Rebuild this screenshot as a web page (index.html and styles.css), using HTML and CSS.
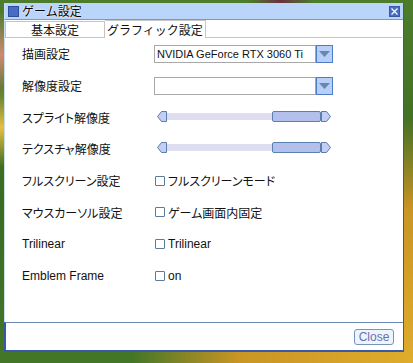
FILE: index.html
```html
<!DOCTYPE html>
<html>
<head>
    <title>ゲーム設定</title>
    <link rel="stylesheet" href="styles.css">
</head>
<body>
    <div class="window">
        <div class="titlebar">
            <span class="title-icon"></span>
            <span class="title">ゲーム設定</span>
            <span class="close-x">
                <svg width="9" height="9" viewBox="0 0 9 9"><path d="M1.5 1.5 L7.5 7.5 M7.5 1.5 L1.5 7.5" stroke="#fff" stroke-width="1.2"/></svg>
            </span>
        </div>

        <div class="tabs">
            <div class="tab">基本設定</div>
            <div class="tab active">グラフィック設定</div>
            <div class="tab-rest"></div>
        </div>

        <div class="content">
            <div class="row">
                <label>描画設定</label>
                <div class="select">
                    <span class="select-value">NVIDIA GeForce RTX 3060 Ti</span>
                    <span class="select-btn"><svg width="11" height="6" viewBox="0 0 11 6"><path d="M0 0 H11 L5.5 6 Z" fill="#6a86ac"/></svg></span>
                </div>
            </div>
            <div class="row">
                <label>解像度設定</label>
                <div class="select">
                    <span class="select-value"></span>
                    <span class="select-btn"><svg width="11" height="6" viewBox="0 0 11 6"><path d="M0 0 H11 L5.5 6 Z" fill="#6a86ac"/></svg></span>
                </div>
            </div>
            <div class="row">
                <label>スプライト解像度</label>
                <div class="slider">
                    <svg class="arrow" width="10" height="13" viewBox="0 0 10 13"><path d="M9.5 1.5 H4.5 L0.5 6.5 L4.5 11.5 H9.5 Z" fill="#c4cef2" stroke="#5a7cb0"/></svg>
                    <div class="track"><div class="thumb"></div></div>
                    <svg class="arrow" width="10" height="13" viewBox="0 0 10 13"><path d="M0.5 1.5 H5.5 L9.5 6.5 L5.5 11.5 H0.5 Z" fill="#c4cef2" stroke="#5a7cb0"/></svg>
                </div>
            </div>
            <div class="row">
                <label>テクスチャ解像度</label>
                <div class="slider">
                    <svg class="arrow" width="10" height="13" viewBox="0 0 10 13"><path d="M9.5 1.5 H4.5 L0.5 6.5 L4.5 11.5 H9.5 Z" fill="#c4cef2" stroke="#5a7cb0"/></svg>
                    <div class="track"><div class="thumb"></div></div>
                    <svg class="arrow" width="10" height="13" viewBox="0 0 10 13"><path d="M0.5 1.5 H5.5 L9.5 6.5 L5.5 11.5 H0.5 Z" fill="#c4cef2" stroke="#5a7cb0"/></svg>
                </div>
            </div>
            <div class="row">
                <label>フルスクリーン設定</label>
                <div class="check"><span class="box"></span>フルスクリーンモード</div>
            </div>
            <div class="row">
                <label>マウスカーソル設定</label>
                <div class="check"><span class="box"></span>ゲーム画面内固定</div>
            </div>
            <div class="row">
                <label>Trilinear</label>
                <div class="check"><span class="box"></span>Trilinear</div>
            </div>
            <div class="row">
                <label>Emblem Frame</label>
                <div class="check"><span class="box"></span>on</div>
            </div>
        </div>

        <div class="footer">
            <button class="close-btn">Close</button>
        </div>
    </div>
</body>
</html>
```

FILE: styles.css
```css
body {
    margin: 0;
    width: 413px;
    height: 363px;
    overflow: hidden;
    font-family: "Liberation Sans", "Noto Sans CJK JP", sans-serif;
    font-size: 12px;
    color: #111;
    background:
        radial-gradient(ellipse at 100% 100%, #e0ac2c 0, #c99524 30%, rgba(200,150,40,0) 48%),
        radial-gradient(ellipse at 0% 35%, #e8c040 0, rgba(230,190,60,0) 12%),
        radial-gradient(ellipse at 0% 15%, #d08a70 0, rgba(200,130,110,0) 10%),
        radial-gradient(ellipse at 68% 0%, #6a3040 0, rgba(100,50,60,0) 8%),
        linear-gradient(to bottom, #4c7c2c, #3c6a22 55%, #447628);
}
.window {
    margin: 3px 0 0 4px;
    width: 400px;
    height: 349px;
    box-sizing: border-box;
    display: flex;
    flex-direction: column;
    background-color: white;
    border-right: 1px solid #3a58a8;
    border-bottom: 2px solid #3a58a8;
}
.titlebar {
    height: 16px;
    display: flex;
    align-items: center;
    background-color: #bad4fa;
    border-bottom: 1px solid #7c98c0;
    border-left: 1px solid #c8dcf4;
    padding: 0 3px 0 3px;
}
.title-icon {
    width: 9px;
    height: 9px;
    background-color: #4a6cc2;
    border: 1px solid #2c4c9c;
    margin-right: 3px;
}
.title {
    flex: 1;
    font-family: "Noto Sans CJK JP", sans-serif;
    font-size: 12px;
    line-height: 16px;
    color: #000;
    text-shadow: 0 0 2px #fff, 0 0 1px #fff;
}
.close-x {
    width: 9px;
    height: 9px;
    display: flex;
    background-color: #4a6cc2;
    border: 1px solid #3a5aa8;
}
.tabs {
    display: flex;
    height: 18px;
    border-left: 1px solid #c8dcf4;
}
.tab {
    width: 98px;
    margin-top: 1px;
    text-align: center;
    font-family: "Noto Sans CJK JP", sans-serif;
    line-height: 15px;
    border: 1px solid #c4c4c4;
    background-color: white;
}
.tab.active {
    margin-top: 0;
    border-left: none;
    border-bottom: none;
    border-color: #c8c8c8;
    width: 100px;
    line-height: 17px;
}
.tab-rest {
    flex: 1;
    border-bottom: 1px solid #c4c4c4;
    margin-right: 1px;
}
.content {
    flex: 1;
    display: grid;
    grid-auto-rows: 31.7px;
    align-content: start;
    padding: 0 0 0 17px;
    border-left: 1px solid #c8dcf4;
}
.row {
    display: flex;
    align-items: center;
}
label {
    width: 132px;
    font-feature-settings: "palt";
}
.select {
    display: flex;
    height: 18px;
}
.select-value {
    width: 162px;
    border: 1px solid #a8a8a8;
    padding-left: 2px;
    box-sizing: border-box;
    line-height: 16px;
    white-space: nowrap;
    overflow: hidden;
    font-size: 11px;
}
.select-btn {
    width: 17px;
    height: 18px;
    box-sizing: border-box;
    display: flex;
    align-items: center;
    justify-content: center;
    background-color: #b8d0f8;
    border: 1px solid #4c7cc8;
}
.slider {
    display: flex;
    align-items: center;
    margin-left: 3px;
    margin-top: -2px;
}
.arrow {
    display: block;
}
.track {
    width: 154px;
    height: 7px;
    background-color: #dedef0;
    display: flex;
    justify-content: flex-end;
    align-items: center;
}
.thumb {
    width: 47px;
    height: 9px;
    background-color: #b4c0ec;
    border: 1px solid #5a80b0;
    border-radius: 2px;
}
.check {
    display: flex;
    align-items: center;
    margin-left: 1px;
    font-feature-settings: "palt";
}
.box {
    width: 8px;
    height: 8px;
    border: 1px solid #5a7a9c;
    border-radius: 1px;
    margin-right: 3px;
}
.footer {
    height: 27px;
    display: flex;
    justify-content: flex-end;
    align-items: center;
    border-top: 1px solid #6a88b0;
    border-left: 2px solid #3a58a8;
    padding-right: 9px;
}
.close-btn {
    width: 40px;
    height: 16px;
    padding: 0;
    font-family: "Liberation Sans", sans-serif;
    font-size: 12px;
    color: #6870b0;
    background-color: #eef4fc;
    border: 1px solid #7494bc;
    border-radius: 3px;
}
```
